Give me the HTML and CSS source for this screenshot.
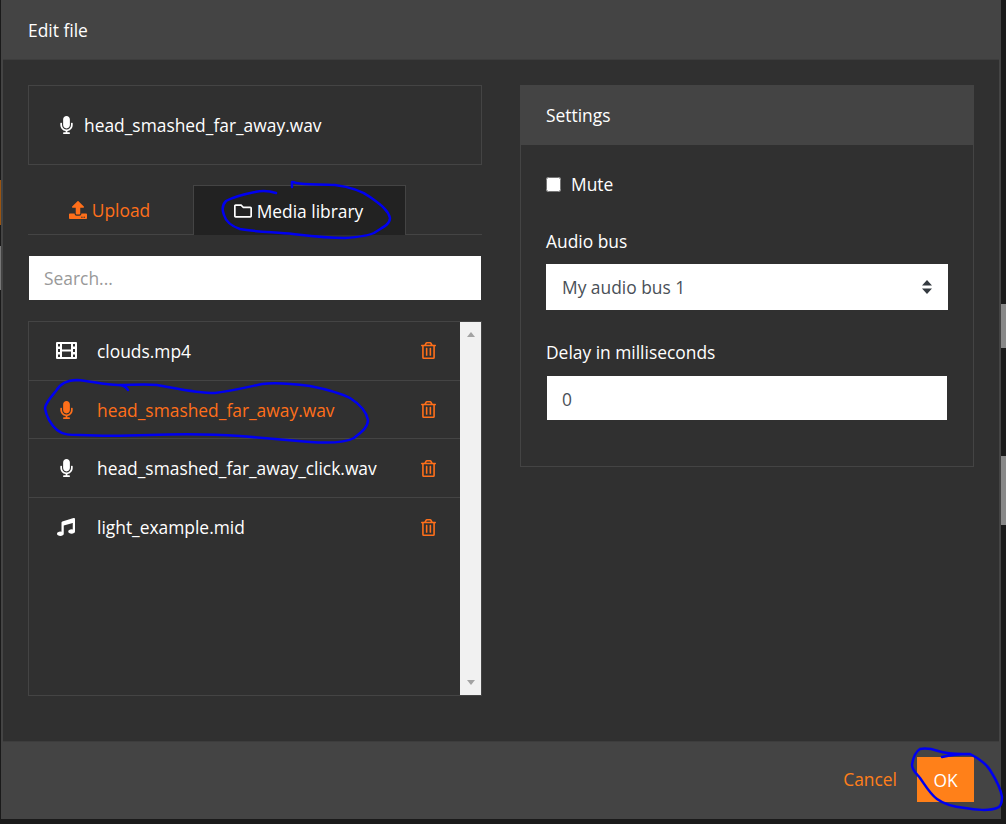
FILE: index.html
```html
<!DOCTYPE html>
<html>
<head>
  <meta charset="utf-8">
  <title>Edit file</title>
  <link rel="stylesheet" href="styles.css">
</head>
<body>
  <svg width="0" height="0" class="defs">
    <symbol id="i-mic" viewBox="0 0 352 512"><path d="M176 352c53.02 0 96-42.98 96-96V96c0-53.02-42.98-96-96-96S80 42.98 80 96v160c0 53.02 42.98 96 96 96zm160-160h-16c-8.84 0-16 7.16-16 16v48c0 74.8-64.49 134.82-140.79 127.38C96.71 376.89 48 317.11 48 250.3V208c0-8.84-7.16-16-16-16H16c-8.84 0-16 7.16-16 16v40.16c0 89.64 63.97 169.55 152 181.69V464H96c-8.84 0-16 7.16-16 16v16c0 8.84 7.16 16 16 16h160c8.84 0 16-7.16 16-16v-16c0-8.84-7.16-16-16-16h-56v-33.77C285.71 418.47 352 344.9 352 256v-48c0-8.84-7.16-16-16-16z"/></symbol>
    <symbol id="i-trash" viewBox="0 0 448 512"><path d="M268 416h24a12 12 0 0 0 12-12V188a12 12 0 0 0-12-12h-24a12 12 0 0 0-12 12v216a12 12 0 0 0 12 12zM432 80h-82.41l-34-56.7A48 48 0 0 0 274.41 0H173.59a48 48 0 0 0-41.16 23.3L98.41 80H16A16 16 0 0 0 0 96v16a16 16 0 0 0 16 16h16v336a48 48 0 0 0 48 48h288a48 48 0 0 0 48-48V128h16a16 16 0 0 0 16-16V96a16 16 0 0 0-16-16zM171.84 50.91A6 6 0 0 1 177 48h94a6 6 0 0 1 5.15 2.91L293.61 80H154.39zM368 464H80V128h288zm-212-48h24a12 12 0 0 0 12-12V188a12 12 0 0 0-12-12h-24a12 12 0 0 0-12 12v216a12 12 0 0 0 12 12z"/></symbol>
  </svg>

  <div class="edge edge-orange"></div>
  <div class="edge edge-grey"></div>
  <div class="thumb thumb-a"></div>
  <div class="thumb thumb-b"></div>

  <div id="modal">
    <div class="modal-header">Edit file</div>

    <div class="modal-body">
      <div class="col">
        <div class="current-file">
          <svg class="icon mic"><use href="#i-mic"/></svg>
          <span>head_smashed_far_away.wav</span>
        </div>

        <div class="tabs">
          <div class="tab tab-upload">
            <svg class="icon tab-icon" viewBox="0 0 512 512"><path d="M296 384h-80c-13.3 0-24-10.7-24-24V192h-87.7c-17.8 0-26.7-21.5-14.1-34.1L242.3 5.7c7.5-7.5 19.8-7.5 27.3 0l152.2 152.2c12.6 12.6 3.7 34.1-14.1 34.1H320v168c0 13.3-10.7 24-24 24zm216-8v112c0 13.3-10.7 24-24 24H24c-13.3 0-24-10.7-24-24V376c0-13.3 10.7-24 24-24h136v8c0 30.9 25.1 56 56 56h80c30.9 0 56-25.1 56-56v-8h136c13.3 0 24 10.7 24 24zm-124 88c0-11-9-20-20-20s-20 9-20 20 9 20 20 20 20-9 20-20zm64 0c0-11-9-20-20-20s-20 9-20 20 9 20 20 20 20-9 20-20z"/></svg>
            Upload
          </div>
          <div class="tab tab-active">
            <svg class="icon tab-icon" viewBox="0 0 512 512"><path d="M464 128H272l-54.63-54.63c-6-6-14.14-9.37-22.63-9.37H48C21.49 64 0 85.49 0 112v288c0 26.51 21.49 48 48 48h416c26.51 0 48-21.49 48-48V176c0-26.51-21.49-48-48-48zm0 272H48V118c0-3.31 2.69-6 6-6h134.06c1.59 0 3.12.63 4.24 1.76L256 176h202c3.31 0 6 2.69 6 6v218z"/></svg>
            Media library
          </div>
        </div>

        <input class="search" type="text" placeholder="Search...">

        <div class="file-list">
          <div class="rows">
            <div class="row">
              <span class="row-icon">
                <svg class="film" viewBox="0 0 21 17"><path fill-rule="evenodd" d="M1 0h19a1 1 0 0 1 1 1v15a1 1 0 0 1-1 1H1a1 1 0 0 1-1-1V1a1 1 0 0 1 1-1zM2 2v2.500h2V2zM2 7v3h2V7zM2 12.500V15h2v-2.500zM17 2v2.500h2V2zM17 7v3h2V7zM17 12.500V15h2v-2.500zM6 2v5.500h9V2zM6 9.500V15h9V9.500z"/></svg>
              </span>
              <span class="row-name">clouds.mp4</span>
              <svg class="icon trash"><use href="#i-trash"/></svg>
            </div>
            <div class="row row-selected">
              <span class="row-icon"><svg class="icon mic"><use href="#i-mic"/></svg></span>
              <span class="row-name">head_smashed_far_away.wav</span>
              <svg class="icon trash"><use href="#i-trash"/></svg>
            </div>
            <div class="row">
              <span class="row-icon"><svg class="icon mic"><use href="#i-mic"/></svg></span>
              <span class="row-name">head_smashed_far_away_click.wav</span>
              <svg class="icon trash"><use href="#i-trash"/></svg>
            </div>
            <div class="row row-last">
              <span class="row-icon">
                <svg class="icon music" viewBox="0 0 512 512"><path d="M470.38 1.51L150.41 96A32 32 0 0 0 128 126.510v261.410A139 139 0 0 0 96 384c-53 0-96 28.660-96 64s43 64 96 64 96-28.660 96-64V214.320l256-75v184.610a138.400 138.400 0 0 0-32-3.930c-53 0-96 28.660-96 64s43 64 96 64 96-28.650 96-64V32a32 32 0 0 0-41.620-30.490z"/></svg>
              </span>
              <span class="row-name">light_example.mid</span>
              <svg class="icon trash"><use href="#i-trash"/></svg>
            </div>
          </div>
          <div class="scrollbar">
            <span class="arrow-up"></span>
            <span class="arrow-down"></span>
          </div>
        </div>
      </div>

      <div class="col">
        <div class="settings">
          <div class="settings-header">Settings</div>
          <div class="settings-body">
            <label class="check-line">
              <input type="checkbox">
              <span>Mute</span>
            </label>
            <div class="field-label">Audio bus</div>
            <div class="fake-select">
              My audio bus 1
              <svg class="updown" viewBox="0 0 10 14"><path d="M5 0l5 5.500H0zM5 14L0 8.500h10z"/></svg>
            </div>
            <div class="field-label delay-label">Delay in milliseconds</div>
            <input class="number" type="text" value="0">
          </div>
        </div>
      </div>
    </div>

    <div class="modal-footer">
      <a class="cancel">Cancel</a>
      <button class="ok">OK</button>
    </div>
  </div>

  <!-- pen marks drawn on top of the screenshot -->
  <svg class="pen" viewBox="0 0 1006 824">
    <path d="M276 193C270 191 263 190 255 192C245 194 235 196 226 201C222 205 222 210 224 215C226 222 231 226 240 229C255 232 275 232 293 234C310 236 325 238 345 238C358 237 368 236 374 233C381 228 390 225 390 218C388 209 378 203 370 197C362 191 350 187 335 185C320 184 305 185 296 183C294 182 293 182 292 182L292 187"/>
    <path d="M128 390C126 387 123 385 118 385C105 385 90 381 77 380C68 380 60 384 56 391C51 397 46 402 45 408C46 416 51 425 57 430C63 435 70 435 80 435C100 436 120 436 150 435C180 434 210 434 240 436C265 438 285 440 310 442C325 443 345 443 354 438C360 433 368 428 368 420C366 410 358 403 350 398C338 392 325 389 310 386C295 384 275 382 262 384C248 387 232 391 215 393C195 393 175 388 157 385C145 384 132 385 120 385"/>
    <path d="M942 757C950 755 962 754 970 754C978 758 985 762 990 770C995 778 1001 788 1002 797C1002 802 1001 807 997 808C990 811 975 810 965 808C955 807 945 805 937 799C930 794 925 785 920 778C916 773 912 770 912 765C913 758 915 752 920 749C926 748 932 749 938 751C950 755 960 754 970 754"/>
  </svg>
</body>
</html>
```

FILE: styles.css
```css
* {
  box-sizing: border-box;
}

html, body {
  height: 100%;
}

body {
  position: relative;
  margin: 0;
  overflow: hidden;
  background-color: #1a1a1a;
  color: #fff;
  font-family: "Open Sans", Arial, sans-serif;
  font-size: 17.4px;
}

.defs {
  position: absolute;
}

.edge {
  position: absolute;
  left: 0;
  width: 1px;
}

.edge-orange {
  top: 180px;
  height: 45px;
  background-color: #9a5410;
}

.edge-grey {
  top: 246px;
  height: 44px;
  background-color: #777;
}

.thumb {
  position: absolute;
  left: 1001px;
  width: 5px;
  background-color: #888;
}

.thumb-a {
  top: 304px;
  height: 44px;
}

.thumb-b {
  top: 456px;
  height: 69px;
}

#modal {
  display: flex;
  flex-direction: column;
  width: 1000px;
  height: 819px;
  margin-left: 1px;
  border: solid #444;
  border-width: 0 2px;
  background-color: #303030;
}

.modal-header {
  height: 60px;
  padding: 18px 25px 0;
  background-color: #444;
  border-bottom: 1px solid #3d3d3d;
  line-height: 24px;
}

.modal-body {
  display: flex;
  flex: 1;
  gap: 38px;
  padding: 25px 25px 0;
}

.col {
  width: 454px;
}

.icon {
  fill: currentColor;
}

.current-file {
  display: flex;
  align-items: center;
  height: 80px;
  padding-left: 31px;
  border: 1px solid #444;
}

.current-file span {
  padding-bottom: 1px;
}

.mic {
  width: 13px;
  height: 18px;
}

.current-file .mic {
  margin-right: 11px;
}

.tabs {
  display: flex;
  height: 50px;
  margin-top: 20px;
  border-bottom: 1px solid #444;
}

.tab {
  display: flex;
  align-items: center;
  justify-content: center;
  gap: 5px;
  height: 50px;
  padding-right: 2px;
}

.tab-upload {
  width: 165px;
  color: #ff6f1a;
}

.tab-active {
  width: 213px;
  background-color: #222;
  border: 1px solid #444;
  border-bottom: none;
}

.tab-icon {
  width: 18px;
  height: 18px;
}

.search {
  display: block;
  width: 452px;
  height: 44px;
  margin: 21px 1px 21px;
  padding: 0 15px 1px;
  border: none;
  border-radius: 0;
  background-color: #fff;
  color: #495057;
  font: inherit;
}

.search::placeholder {
  color: #999;
}

.file-list {
  display: flex;
  height: 375px;
  border: 1px solid #444;
}

.rows {
  flex: 1;
}

.row {
  display: flex;
  align-items: center;
  height: 58.7px;
  padding-right: 24px;
  border-bottom: 1px solid #444;
}

.row-last {
  border-bottom: none;
}

.row-selected {
  color: #ff6f1a;
}

.row-icon {
  display: flex;
  justify-content: center;
  width: 68px;
  flex-shrink: 0;
  padding-left: 6px;
}

.row-name {
  flex: 1;
}

.film {
  width: 21px;
  height: 17px;
  fill: #fff;
}

.music {
  width: 18px;
  height: 18px;
}

.trash {
  width: 15px;
  height: 17px;
  color: #ff6f1a;
}

.scrollbar {
  display: flex;
  flex-direction: column;
  justify-content: space-between;
  align-items: center;
  width: 21px;
  padding: 10px 0;
  background-color: #f1f1f1;
}

.arrow-up, .arrow-down {
  width: 0;
  height: 0;
  border-left: 4px solid transparent;
  border-right: 4px solid transparent;
}

.arrow-up {
  border-bottom: 5px solid #a3a3a3;
}

.arrow-down {
  border-top: 5px solid #a3a3a3;
}

.settings {
  height: 382px;
  border: 1px solid #444;
}

.settings-header {
  height: 59px;
  padding: 17px 25px 0;
  background-color: #444;
  line-height: 24px;
}

.settings-body {
  padding: 27px 25px 0;
}

.check-line {
  display: flex;
  align-items: center;
  gap: 10px;
  height: 24px;
}

.check-line input {
  width: 15px;
  height: 15px;
  margin: 0;
}

.field-label {
  margin-top: 33px;
  line-height: 24px;
}

.delay-label {
  margin-top: 30px;
}

.fake-select {
  display: flex;
  align-items: center;
  justify-content: space-between;
  width: 402px;
  height: 46px;
  margin-top: 11px;
  padding: 0 16px 1px;
  background-color: #fff;
  color: #495057;
}

.updown {
  width: 10px;
  height: 14px;
  fill: #343a40;
}

.number {
  display: block;
  width: 400px;
  height: 44px;
  margin: 12px 1px 0;
  padding: 1px 15px 0;
  border: none;
  border-radius: 0;
  background-color: #fff;
  color: #495057;
  font: inherit;
}

.modal-footer {
  display: flex;
  align-items: center;
  justify-content: flex-end;
  gap: 20px;
  height: 78px;
  padding: 0 25px 2px 0;
  background-color: #444;
  border-top: 1px solid #3d3d3d;
}

.cancel {
  padding-bottom: 1px;
  color: #ff7f1a;
}

.ok {
  width: 57px;
  height: 45px;
  border: none;
  background-color: #ff8019;
  color: #fff;
  font: inherit;
}

.pen {
  position: absolute;
  top: 0;
  left: 0;
  width: 1006px;
  height: 824px;
  pointer-events: none;
  fill: none;
  stroke: #0000f0;
  stroke-width: 2.5;
  stroke-linecap: round;
  stroke-linejoin: round;
}
```
